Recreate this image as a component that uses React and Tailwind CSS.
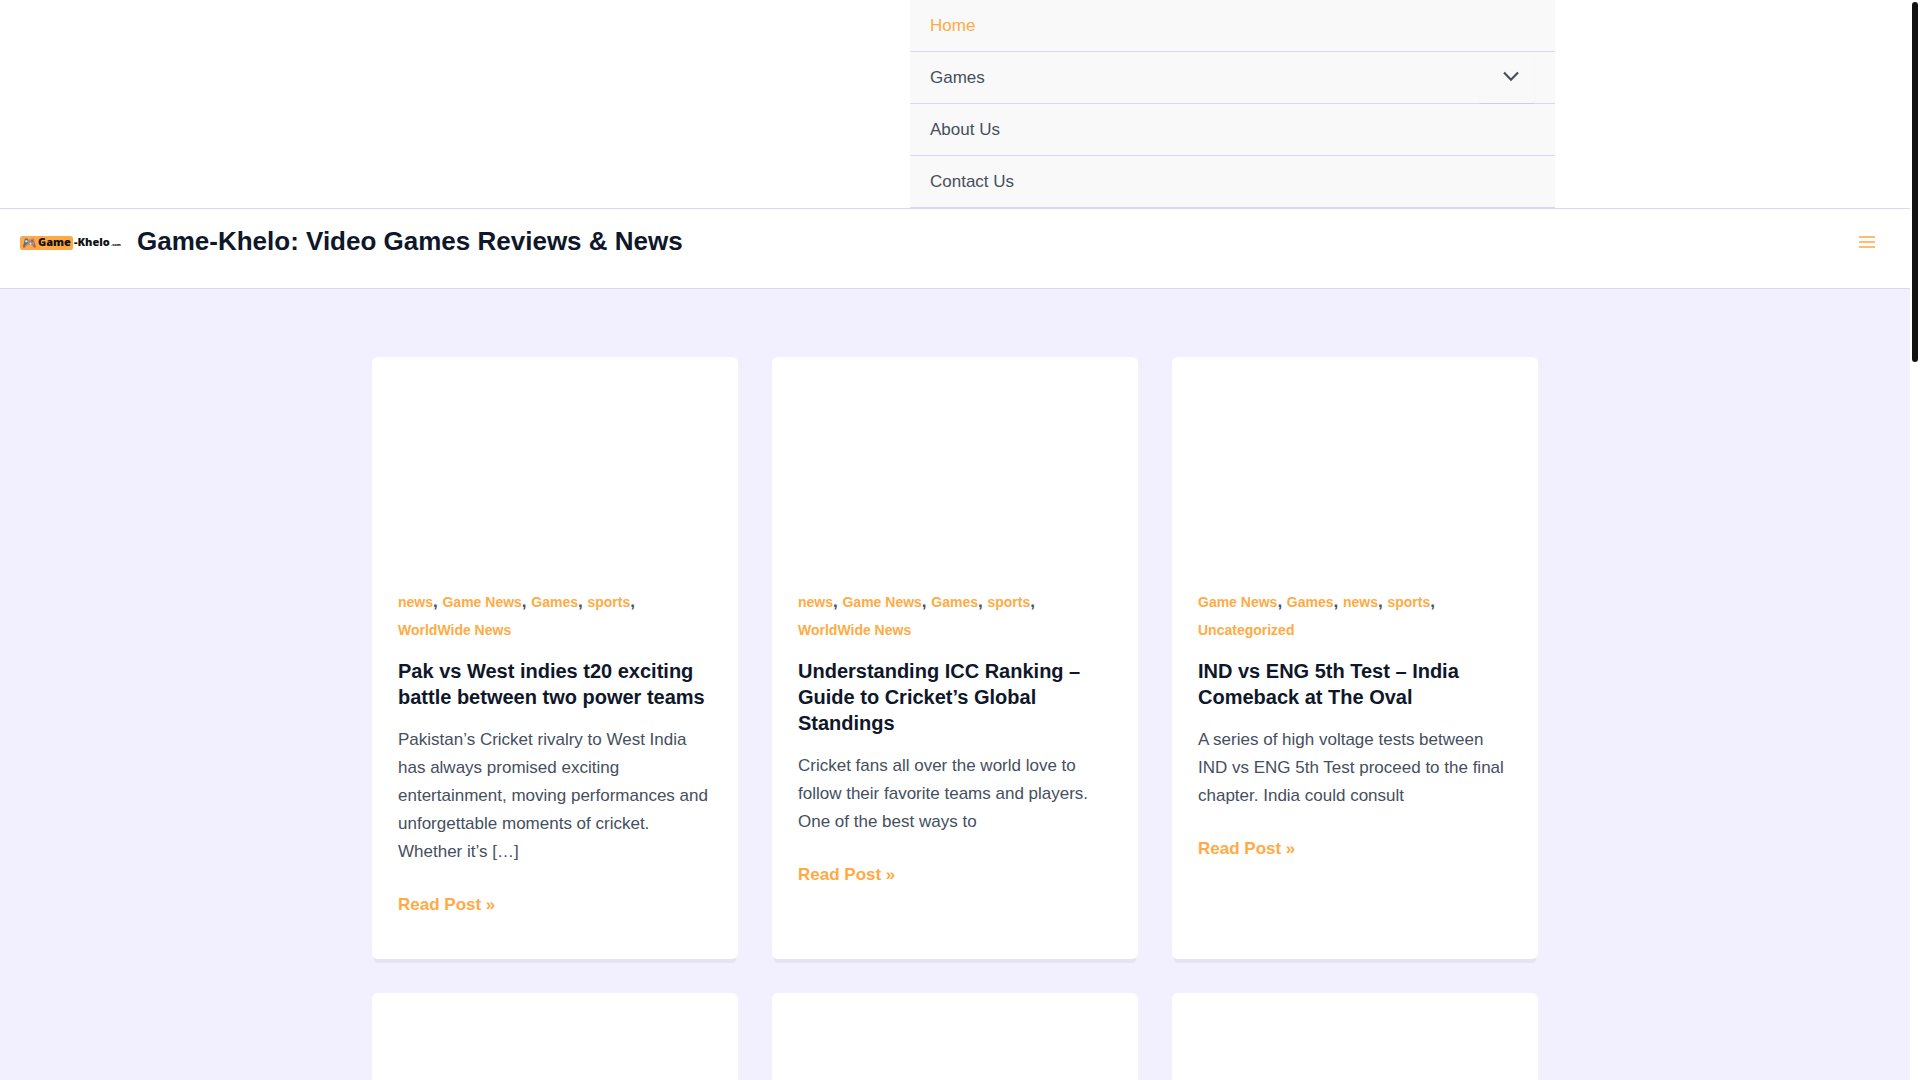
import React from 'react';

const menuItems = [
    { label: 'Home', active: true },
    { label: 'Games', hasSubmenu: true },
    { label: 'About Us' },
    { label: 'Contact Us' },
];

const posts = [
    {
        categories: ['news', 'Game News', 'Games', 'sports', 'WorldWide News'],
        title: 'Pak vs West indies t20 exciting battle between two power teams',
        excerpt:
            'Pakistan’s Cricket rivalry to West India has always promised exciting entertainment, moving performances and unforgettable moments of cricket. Whether it’s […]',
    },
    {
        categories: ['news', 'Game News', 'Games', 'sports', 'WorldWide News'],
        title: 'Understanding ICC Ranking – Guide to Cricket’s Global Standings',
        excerpt:
            'Cricket fans all over the world love to follow their favorite teams and players. One of the best ways to',
    },
    {
        categories: ['Game News', 'Games', 'news', 'sports', 'Uncategorized'],
        title: 'IND vs ENG 5th Test – India Comeback at The Oval',
        excerpt:
            'A series of high voltage tests between IND vs ENG 5th Test proceed to the final chapter. India could consult',
    },
];

function Logo() {
    return (
        <svg width="102" height="16" viewBox="0 0 102 16" role="img" aria-label="Game-Khelo.com">
            <rect x="0" y="1" width="53" height="14" rx="2.5" fill="#ffa846" />
            {/* Game controller */}
            <path d="M5 3.5h2l1 1h3l1-1h2l1.8 8.5-1.6 1-2.7-3H7.4l-2.6 3-1.6-1z" fill="#a08f83" />
            <path d="M5 3.5h2l1 1v3l-2 2-2 3-1-.5z" fill="#4f7480" />
            <circle cx="6.3" cy="6.3" r="1.2" fill="#d8d5cf" />
            <circle cx="12.3" cy="6" r="1.2" fill="#d9503c" />
            <circle cx="10.5" cy="8.7" r="1" fill="#e9dfd3" />
            <path d="M14.5 7.5l1.3 4.5-1 .7-1.3-2z" fill="#d9503c" />
            <path d="M3.9 9l-.9 3 1 .6.9-1.6z" fill="#d9503c" />
            <g fontFamily="'Open Sans', sans-serif" fontWeight="800" fill="#111">
                <text x="18" y="11" fontSize="11">Game</text>
                <text x="54" y="11" fontSize="11">-Khelo</text>
                <text x="91" y="11" fontSize="4">.com</text>
            </g>
        </svg>
    );
}

function PostCard({ post }) {
    return (
        <article className="rounded-md bg-white shadow-[0_6px_0_-2px_#e6e4f1]">
            <div className="h-[205px]" />
            <div className="px-[26px] pt-[26px] pb-10">
                <div className="font-bold">
                    {post.categories.map((category, idx) => (
                        <React.Fragment key={category}>
                            <a href="#" className="text-sm/[14px] text-[#ffab45]">{category}</a>
                            {idx < post.categories.length - 1 && ', '}
                        </React.Fragment>
                    ))}
                </div>
                <h2 className="mt-3.5 text-[20px]/[26px] font-bold text-[#0f172a]">
                    <a href="#">{post.title}</a>
                </h2>
                <p className="mt-4">{post.excerpt}</p>
                <p className="mt-[25px]">
                    <a href="#" className="font-bold text-[#ffab45]">Read Post »</a>
                </p>
            </div>
        </article>
    );
}

export default function App() {
    return (
        <div className="flex h-screen overflow-hidden bg-white font-['Liberation_Sans',Arial,sans-serif] text-[17px]/[28px] text-[#454f5e]">
            <div className="min-w-0 flex-1 overflow-hidden bg-[#f2f0fe]">
                <header className="bg-white">
                    <div className="border-b border-[#d8d8f5]">
                        <nav className="mr-[355px] ml-auto w-[645px] bg-[#f9f9f9]">
                            <ul>
                                {menuItems.map((item) => (
                                    <li key={item.label} className="flex h-[52px] items-center justify-between border-b border-[#d8d8f5] px-5">
                                        <a href="#" className={item.active ? 'text-[#ffab45]' : ''}>
                                            {item.label}
                                        </a>
                                        {item.hasSubmenu && (
                                            <button type="button" aria-label="Toggle submenu" className="flex h-[51px] w-14 items-center justify-center rounded-sm pb-0.5 pl-2 shadow-[0_1px_1px_rgba(0,0,0,0.06)]">
                                                <svg width="16" height="11" viewBox="0 0 16 11" fill="none" stroke="currentColor" strokeWidth="2.2">
                                                    <path d="M1 1.5l7 7.2 7-7.2" />
                                                </svg>
                                            </button>
                                        )}
                                    </li>
                                ))}
                            </ul>
                        </nav>
                    </div>
                    <div className="flex h-20 items-start justify-between border-b border-[#d8d8f5] px-5 pt-4">
                        <div className="flex items-center gap-[15px]">
                            <a href="#" className="pt-1"><Logo /></a>
                            <h1 className="text-[26px]/[32px] font-bold text-[#0f172a]">
                                <a href="#">Game-Khelo: Video Games Reviews &amp; News</a>
                            </h1>
                        </div>
                        <button type="button" aria-label="Main menu" className="mr-[15px] flex h-[34px] items-center">
                            <svg width="16" height="12" viewBox="0 0 16 12" fill="#ffbc6a">
                                <path d="M0 0h16v2H0zM0 5h16v2H0zM0 10h16v2H0z" />
                            </svg>
                        </button>
                    </div>
                </header>

                <main className="mx-auto grid max-w-[1166px] grid-cols-3 gap-[34px] pt-[68px]">
                    {posts.map((post) => (
                        <PostCard key={post.title} post={post} />
                    ))}
                    {posts.map((post) => (
                        <article key={post.title} className="h-[600px] rounded-md bg-white shadow-[0_6px_0_-2px_#e6e4f1]" />
                    ))}
                </main>
            </div>

            {/* Scrollbar */}
            <div className="w-2.5 px-0.5 pt-0.5">
                <div className="h-[360px] rounded-full bg-[#121212]" />
            </div>
        </div>
    );
}
